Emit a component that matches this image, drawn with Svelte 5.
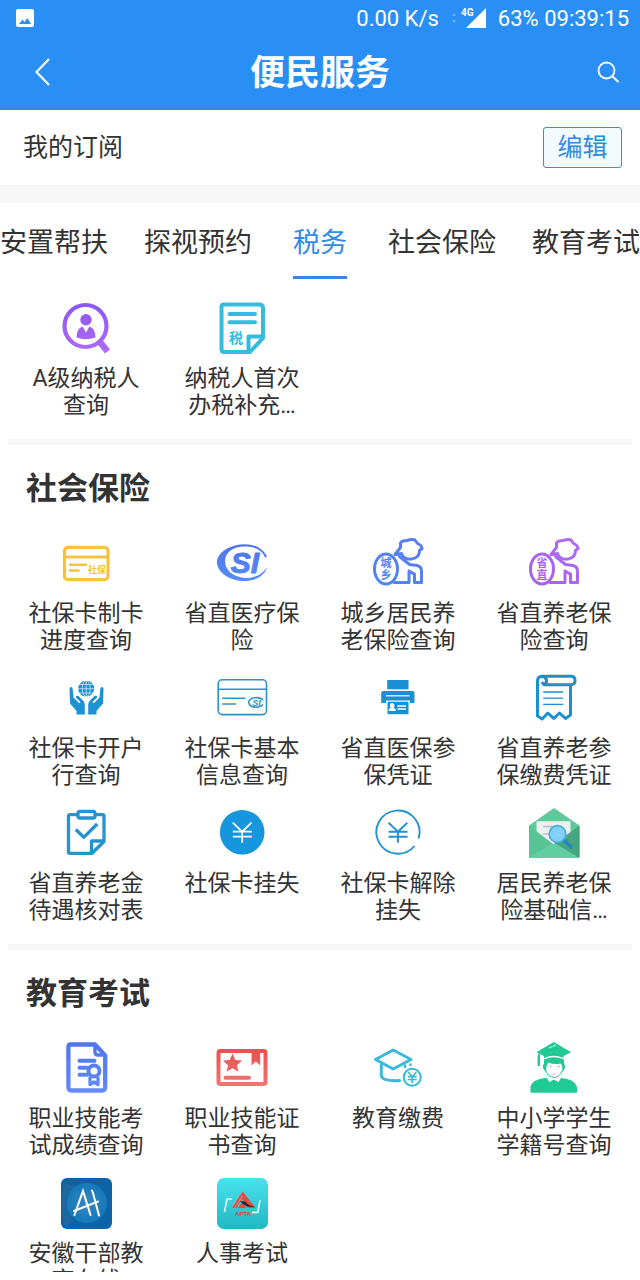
<script lang="ts">
  type Service = { icon: string; name: string };
  type Section = { title: string; services: Service[] };

  const tabs = ['安置帮扶', '探视预约', '税务', '社会保险', '教育考试'];
  let activeTab = $state('税务');

  const taxServices: Service[] = [
    { icon: 'taxpayer', name: 'A级纳税人查询' },
    { icon: 'taxform', name: '纳税人首次办税补充…' },
  ];

  const sections: Section[] = [
    {
      title: '社会保险',
      services: [
        { icon: 'card', name: '社保卡制卡进度查询' },
        { icon: 'si', name: '省直医疗保险' },
        { icon: 'urban', name: '城乡居民养老保险查询' },
        { icon: 'province', name: '省直养老保险查询' },
        { icon: 'hands', name: '社保卡开户行查询' },
        { icon: 'cardinfo', name: '社保卡基本信息查询' },
        { icon: 'printer', name: '省直医保参保凭证' },
        { icon: 'receipt', name: '省直养老参保缴费凭证' },
        { icon: 'clipboard', name: '省直养老金待遇核对表' },
        { icon: 'yen', name: '社保卡挂失' },
        { icon: 'yenring', name: '社保卡解除挂失' },
        { icon: 'envelope', name: '居民养老保险基础信…' },
      ],
    },
    {
      title: '教育考试',
      services: [
        { icon: 'score', name: '职业技能考试成绩查询' },
        { icon: 'certificate', name: '职业技能证书查询' },
        { icon: 'tuition', name: '教育缴费' },
        { icon: 'student', name: '中小学学生学籍号查询' },
        { icon: 'cadre', name: '安徽干部教育在线' },
        { icon: 'personnel', name: '人事考试' },
      ],
    },
  ];
</script>

{#snippet elder(top: string, bottom: string, id: string, from: string, to: string)}
  <defs>
    <linearGradient id={id} gradientUnits="userSpaceOnUse" x1="10" y1="48" x2="40" y2="0">
      <stop offset="0" stop-color={from} />
      <stop offset="1" stop-color={to} />
    </linearGradient>
  </defs>
  <g fill="none" stroke="url(#{id})" stroke-width="3" stroke-linejoin="round" stroke-linecap="round">
    <ellipse cx="13" cy="31" rx="11.5" ry="15" />
    <path d="M22 16.500 L27.500 9.500 L27.500 5 Q29 2.500 34 2.500 Q39 .8 42 2 L44.500 5.500 Q49 7.500 49 10.500 L46.500 12.500 Q46.500 18 42 20 Q37 22.500 32 20 Q29 18 28.500 15.500 L24 16.500" />
    <path d="M26.500 18.500 L36.500 26.500 L44 27.500 Q48.500 28.500 48.500 33 L48.500 44.500 L41.500 44.500 L41.500 36 M36 33 L36 44.500 L21 44.500 M36 33 L41 36" />
  </g>
  <g fill="url(#{id})" font-size="11" font-weight="bold" text-anchor="middle">
    <text x="13" y="29">{top}</text>
    <text x="13" y="41">{bottom}</text>
  </g>
{/snippet}

{#snippet icon(name: string)}
  <svg class="icon" viewBox="0 0 51 51" aria-hidden="true">
    {#if name === 'taxpayer'}
      <defs>
        <linearGradient id="purple" gradientUnits="userSpaceOnUse" x1="0" y1="0" x2="0" y2="50">
          <stop offset="0" stop-color="#8b55f7" />
          <stop offset="1" stop-color="#b06cf3" />
        </linearGradient>
      </defs>
      <g fill="none" stroke="url(#purple)">
        <circle cx="24.500" cy="23" r="21" stroke-width="4.200" />
        <path d="M38.500 38.500 L46.500 48.500" stroke-width="6.500" />
      </g>
      <g fill="url(#purple)">
        <circle cx="25" cy="16.700" r="5.700" />
        <path d="M15.500 34.500 Q15.500 25.500 21.500 23.500 L25 29.500 L28.500 23.500 Q34.500 25.500 34.500 34.500 Q25 38 15.500 34.500Z" />
      </g>
    {:else if name === 'taxform'}
      <g fill="none" stroke="#35bcdd" stroke-width="4" stroke-linejoin="round">
        <path d="M6.500 1.500 H42 Q46 1.500 46 5 V35 L33 49 H7 Q4.500 49 4.500 46 V4 Q4.500 1.500 6.500 1.500Z" />
        <path d="M31.500 48 V33.500 H46" />
        <path d="M12.500 11 H38 M12.500 19.300 H38" stroke-linecap="round" />
      </g>
      <text x="19" y="39.500" font-size="14" font-weight="bold" text-anchor="middle" fill="#35bcdd">税</text>
    {:else if name === 'card'}
      <g fill="none" stroke="#f4c344">
        <rect x="3.500" y="9.300" width="43.500" height="32.400" rx="3.500" stroke-width="3.200" />
        <path d="M3.500 19 H47" stroke-width="3" />
        <path d="M8 26.800 H26 M8 32.500 H18.500" stroke-width="2.600" />
      </g>
      <text x="36" y="35" font-size="9" font-weight="bold" text-anchor="middle" fill="#f4c344">社保</text>
    {:else if name === 'si'}
      <defs>
        <linearGradient id="siblue" gradientUnits="userSpaceOnUse" x1="0" y1="6" x2="0" y2="43">
          <stop offset="0" stop-color="#5270f0" />
          <stop offset="1" stop-color="#558ff5" />
        </linearGradient>
      </defs>
      <path fill="url(#siblue)" d="M50 19 C45 7 30 4 18 7.500 C4 11 -1 20 0 26 C2 36 14 43 27 43 C39 43 48 37 50 29.500 C45 37 37 40 28 40 C15 39 8 31 8 23 C8 14 17 8 29 8.500 C39 9 45 12 48 19.500Z" />
      <text x="28" y="34.500" font-size="30" font-weight="bold" font-style="italic" text-anchor="middle" fill="url(#siblue)" stroke="url(#siblue)" stroke-width="1" class="latin">SI</text>
    {:else if name === 'urban'}
      {@render elder('城', '乡', 'elderblue', '#4f86f3', '#5a7cf3')}
    {:else if name === 'province'}
      {@render elder('省', '直', 'elderpurple', '#a760ee', '#ad6bf5')}
    {:else if name === 'hands'}
      <g fill="#1d92d3">
        <circle cx="25.200" cy="15.700" r="8" />
        <path d="M8.500 16 Q8.500 14 10 14 Q11.500 14 11.700 16 L12.500 24.500 L18 30 Q20 30 19 28.500 L14.800 24.500 Q14.500 22 17.500 23 L22 27.500 Q23.800 29 23.800 32 V41.500 H15.500 V38 L9 30.500Z" />
        <path d="M42.500 16 Q42.500 14 41 14 Q39.500 14 39.300 16 L38.500 24.500 L33 30 Q31 30 32 28.500 L36.200 24.500 Q36.500 22 33.500 23 L29 27.500 Q27.200 29 27.200 32 V41.500 H35.500 V38 L42 30.500Z" />
      </g>
      <g fill="none" stroke="#fff" stroke-width=".6">
        <ellipse cx="25.200" cy="15.700" rx="4" ry="8" />
        <path d="M25.200 7.500 V24 M17 15.700 H33.500 M18 11.500 H32.500 M18 20 H32.500" />
      </g>
    {:else if name === 'cardinfo'}
      <g fill="none" stroke="#2b93cb" stroke-width="1.600">
        <rect x="1.200" y="6.800" width="48.300" height="34.800" rx="4" />
        <path d="M1.200 16.300 H49.500 M5.200 25.200 H28.500 M5.200 31 H19" />
        <path d="M46 27 C43 23.500 34 24 32 28 C30.500 32.500 36 35 41 34 Q44.500 33.500 46 31.500" />
      </g>
      <text x="39.500" y="33" font-size="9" font-weight="bold" font-style="italic" text-anchor="middle" fill="#2b93cb" class="latin">SI</text>
    {:else if name === 'printer'}
      <g fill="#1a90d2">
        <rect x="14.200" y="7" width="21.300" height="9.300" />
        <path d="M10.500 18 H39.500 Q41.500 18 41.500 20 V30 H37 V27.500 H13 V30 H8.200 V20 Q8.200 18 10.500 18Z" />
        <rect x="14.500" y="28.700" width="21" height="12.500" />
      </g>
      <g fill="none" stroke="#fff">
        <path d="M13 22.800 H36.500" stroke-width="1.200" />
        <path d="M24.500 33 H33 M24.500 36 H33" stroke-width="1.300" />
      </g>
      <path fill="#fff" d="M19 30 a2.500 2.500 0 0 1 1.500 4.500 Q23 35.500 23 38 H15.500 Q15.500 35.500 17.800 34.500 A2.500 2.500 0 0 1 19 30Z" />
    {:else if name === 'receipt'}
      <g fill="none" stroke="#1a90d2" stroke-width="3" stroke-linejoin="round">
        <path d="M12.500 3.300 H42 Q46 3.300 46 7.500 Q46 11.700 42 11.700 H15 Q18 10 17.500 7 Q16.500 3.300 12.500 3.300 Q8.500 3.800 8.500 8.500 V43 L13.200 46 L18.800 40 L24.800 45.500 L30.500 40 L36.500 45.500 L41.500 42 V12" />
        <path d="M12.500 9.500 L16 11.500" />
        <path d="M14.200 19 H34.200 M14.200 25.200 H34.200 M14.200 31.300 H34.200" stroke-width="1.300" />
      </g>
    {:else if name === 'clipboard'}
      <g fill="none" stroke="#2892cc" stroke-width="3.300" stroke-linejoin="round">
        <path d="M16 6.700 H9 Q7.500 6.700 7.500 8 V44 Q7.500 45.300 9.300 45.300 H31 L43 33.500 V8 Q43 6.700 41.500 6.700 H35" />
        <rect x="17" y="3.300" width="17" height="6.700" rx="2" />
        <path d="M30.500 44.500 V33 H42.500" />
        <path d="M14.800 21.500 L22.800 29.300 L36.200 16" />
      </g>
    {:else if name === 'yen'}
      <circle cx="25.200" cy="24.300" r="22.300" fill="#1596dd" />
      <path d="M15.800 14.700 L25.200 23.700 L34.500 14.700 M15.800 23.700 H34.800 M15.800 28.700 H34.800 M25.200 23.700 V34.700" fill="none" stroke="#fff" stroke-width="1.700" />
    {:else if name === 'yenring'}
      <g fill="none" stroke="#2492cf" stroke-width="1.900">
        <path d="M45.600 30.500 A21.600 21.600 0 1 0 41.500 38" />
        <path d="M15.500 14.700 L25 23.700 L34.300 14.700 M15.500 23.700 H34.500 M15.500 28.700 H34.500 M25 23.700 V34.700" />
      </g>
    {:else if name === 'envelope'}
      <path fill="#5fc99c" d="M0 17.500 L25 0 L50.500 17.500 V48 Q50.500 50 48.500 50 H2 Q0 50 0 48Z" />
      <path fill="#eef0f0" d="M7.500 13.300 H41.500 V30 L25 40 L7.500 30Z" />
      <path d="M14 18.500 H29 M14 26 H24" stroke="#bdbdbd" stroke-width="1.600" />
      <path fill="#58c496" d="M0 17.500 L24 36 L0 50Z" />
      <path fill="#46a57f" d="M50.500 17.500 L25 36 L50.500 50Z" />
      <path fill="#62cda2" d="M1 49.500 L21 37 Q25 34.500 29 37 L49.500 49.500 Q49 50 48 50 H2Z" />
      <path d="M34 31 L43 40" stroke="#2289be" stroke-width="3.500" />
      <circle cx="28.500" cy="26" r="8.300" fill="#82d1f7" stroke="#47aee2" stroke-width="1.700" />
    {:else if name === 'score'}
      <defs>
        <linearGradient id="docblue" gradientUnits="userSpaceOnUse" x1="0" y1="0" x2="0" y2="50">
          <stop offset="0" stop-color="#4e75ed" />
          <stop offset="1" stop-color="#638bfa" />
        </linearGradient>
      </defs>
      <g fill="none" stroke="url(#docblue)" stroke-width="4.300" stroke-linejoin="round">
        <path d="M9.500 1.500 H34 L44.200 12.500 V44 Q44.200 47.500 41 47.500 H10.500 Q7.400 47.500 7.400 44 V4.500 Q7.400 1.500 9.500 1.500Z" />
        <path d="M34 2 V9 Q34 12 37 12 H44" stroke-width="3.500" />
        <path d="M18.500 17.700 H33.500 M18.500 24.700 H26 M18.500 31.700 H26" stroke-linecap="round" stroke-width="4" />
        <circle cx="33" cy="28" r="5.500" stroke-width="4" />
        <path d="M29 34 V41.500 L33 39 L37 41.500 V34" stroke-width="3.300" />
      </g>
    {:else if name === 'certificate'}
      <defs>
        <linearGradient id="red" gradientUnits="userSpaceOnUse" x1="0" y1="6" x2="0" y2="43">
          <stop offset="0" stop-color="#eb504d" />
          <stop offset="1" stop-color="#ef7672" />
        </linearGradient>
      </defs>
      <g fill="none" stroke="url(#red)" stroke-width="4">
        <rect x="1.500" y="8" width="47" height="33" rx="2" />
        <path d="M8.500 34.700 H32 M8.500 34.800 H32" stroke-linecap="round" />
      </g>
      <path fill="url(#red)" d="M15.500 10.500 L18.300 17 L25 17.500 L20 22.200 L21.500 28.800 L15.500 25.300 L9.500 28.800 L11 22.200 L6 17.500 L12.700 17Z" />
      <path fill="url(#red)" d="M34.500 8 H43.200 V22.500 L38.800 18.500 L34.500 22.500Z" />
    {:else if name === 'tuition'}
      <g fill="none" stroke="#38b9dd" stroke-width="3" stroke-linejoin="round" stroke-linecap="round">
        <path d="M2.500 16.500 L20.200 7 L38 16.500 L20.200 26Z" />
        <path d="M8.300 22 V32 Q8.500 38.500 26.500 37.500" />
        <path d="M32 22.500 V24 M37.500 21.500 V22" stroke-width="2.500" />
        <circle cx="39.200" cy="34.300" r="8.500" stroke-width="2" />
        <path d="M35.500 29.500 L39.200 33.500 L43 29.500 M35.500 33.700 H43 M35.500 36.500 H43 M39.200 33.500 V39.500" stroke-width="1.700" />
      </g>
    {:else if name === 'student'}
      <g fill="#21c994">
        <path d="M7.500 9.300 L24.800 -1 L42.200 9.300 L34.500 13 Q25 5 15 13Z" />
        <path d="M15 12 Q25 5.500 34.500 12 V15 Q25 10.500 15 15Z" />
        <path d="M9.500 10 L11 11 V22.500 Q9.500 24 8.500 22 V15Z" />
        <path d="M15 16.500 Q25 12 35 16.500 V21 Q37 22 35.500 26 L33.500 29 Q33.500 22 31.500 20.500 Q25 22 19.500 19.500 Q17 22 17 29 L14.500 26 Q13 22 15 21Z" />
        <path d="M1.500 49.700 V44 Q3 36 17.500 35 L20.500 39 L24.800 36.500 L29.500 39 L32 35 Q46 36 48 44 V49.700Z" />
      </g>
      <path d="M16.500 27 Q19 34 25 34.500 Q31 34 33.500 27" fill="none" stroke="#21c994" stroke-width="1" />
      <path d="M20 23.500 H22.500 M28 23.500 H30.500 M24 31 H26.500" stroke="#21c994" stroke-width=".6" />
      <path d="M20 5 L27 2" stroke="#c9f5e6" stroke-width="1" />
    {:else if name === 'cadre'}
      <defs>
        <radialGradient id="globe">
          <stop offset="0" stop-color="#3885c1" />
          <stop offset="1" stop-color="#1579b9" />
        </radialGradient>
      </defs>
      <rect width="51" height="51" rx="6" fill="#0d63a5" />
      <path d="M3 6 Q14 5 15 12 L8 28 L12 43 L5 50 Q0 40 0 24Z" fill="#4a7096" opacity=".3" />
      <circle cx="26" cy="25" r="20" fill="url(#globe)" />
      <path d="M13.500 37 L22 13 L29.500 37 M13 33 L37 23.500 M31 12.500 L32 15 L38 37.500" fill="none" stroke="#fff" stroke-width="2" stroke-linecap="round" />
    {:else if name === 'personnel'}
      <defs>
        <linearGradient id="teal" x1="0" y1="0" x2="0" y2="1">
          <stop offset="0" stop-color="#49e2ec" />
          <stop offset="1" stop-color="#21b7c3" />
        </linearGradient>
      </defs>
      <rect width="51" height="51" rx="7" fill="url(#teal)" />
      <path d="M15.200 21 H10 L7.500 34 M43 22 L40.800 34.300 H35" fill="none" stroke="#d6fbff" stroke-width="1.700" />
      <path fill="#e64a45" d="M25.800 13.500 L38.500 30 H31 L25 21 L19.500 30 H14Z" />
      <path fill="#e64a45" d="M25 24 L29.500 30 H21Z" />
      <path d="M22 17.500 L14.500 30 M25.500 18 L17.500 30" stroke="#7ed6d6" stroke-width=".7" />
      <path d="M23 23 L28 23.500 L31 26.500 L38 29 L30 28.500 L26 26Z" fill="#252525" />
      <text x="26" y="37.500" font-size="6" font-weight="bold" text-anchor="middle" fill="#c84f50" class="latin">APTA</text>
    {/if}
  </svg>
{/snippet}

{#snippet grid(services: Service[])}
  <ul class="grid">
    {#each services as service}
      <li>
        <a class="service" href="#{service.icon}">
          {@render icon(service.icon)}
          <span class="label">{service.name}</span>
        </a>
      </li>
    {/each}
  </ul>
{/snippet}

<div class="page">
  <header>
    <div class="status">
      <svg class="picture" viewBox="0 0 18 18" aria-hidden="true">
        <rect width="18" height="18" rx="2" fill="#fff" />
        <path d="M3 15 L6.500 10.500 L8.500 13 L11.500 9 L15 15Z" fill="#298ff5" />
      </svg>
      <span>0.00 K/s</span>
      <svg class="signal" viewBox="0 0 36 22" aria-hidden="true">
        <path d="M1 9 L3 6 L5 9Z M1 13 L3 16 L5 13Z" fill="#6bb3f8" />
        <text x="10" y="9" font-size="10" font-weight="bold" fill="#fff">4G</text>
        <path d="M35 1 V21 H15Z" fill="#fff" />
      </svg>
      <span>63% 09:39:15</span>
    </div>
    <div class="bar">
      <button class="nav" aria-label="返回">
        <svg viewBox="0 0 30 30" width="30" height="30">
          <path d="M21 2 L8.500 15 L21 28" fill="none" stroke="#fff" stroke-width="2.200" />
        </svg>
      </button>
      <h1>便民服务</h1>
      <button class="nav search" aria-label="搜索">
        <svg viewBox="0 0 24 24" width="24" height="24">
          <circle cx="10.500" cy="10.500" r="8" fill="none" stroke="#fff" stroke-width="1.800" />
          <path d="M16.500 16.500 L22.500 22" stroke="#fff" stroke-width="2" />
        </svg>
      </button>
    </div>
  </header>

  <div class="subscribe">
    <span>我的订阅</span>
    <button class="edit">编辑</button>
  </div>

  <nav class="tabs">
    {#each tabs as tab}
      <button class="tab" class:active={tab === activeTab} onclick={() => (activeTab = tab)}>
        <span>{tab}</span>
      </button>
    {/each}
  </nav>

  <main>
    <section>{@render grid(taxServices)}</section>
    {#each sections as section}
      <section>
        <h2>{section.title}</h2>
        {@render grid(section.services)}
      </section>
    {/each}
  </main>
</div>

<style>
  :global(body) {
    margin: 0;
    background: #fff;
  }
  .page {
    display: flex;
    flex-direction: column;
    box-sizing: border-box;
    height: 100vh;
    padding-bottom: 8px;
    overflow: hidden;
    color: #333;
    font-family: Roboto, 'Noto Sans CJK SC', sans-serif;
  }
  button {
    padding: 0;
    border: 0;
    background: none;
    color: inherit;
    font: inherit;
    cursor: pointer;
  }
  header {
    flex: none;
    background: #298ff5;
    color: #fff;
  }
  .status {
    display: flex;
    align-items: center;
    height: 36px;
    padding: 0 11px 0 16px;
    font-size: 22px;
  }
  .picture {
    width: 18px;
    height: 18px;
    margin-right: auto;
  }
  .signal {
    width: 36px;
    height: 22px;
    margin: 0 11px 0 12px;
  }
  .bar {
    display: grid;
    grid-template-columns: 1fr auto 1fr;
    align-items: center;
    height: 72px;
    padding: 0 20px 2px;
  }
  .nav {
    display: flex;
    padding-left: 8px;
  }
  .search {
    justify-self: end;
  }
  h1 {
    margin: 0;
    padding-top: 4px;
    font-size: 35px;
    font-weight: bold;
    line-height: 48px;
  }
  .subscribe {
    display: flex;
    flex: none;
    align-items: center;
    justify-content: space-between;
    height: 75px;
    padding: 0 18px 0 23px;
    border-bottom: 18px solid #f7f7f7;
    font-size: 25px;
    line-height: 36px;
  }
  .edit {
    box-sizing: border-box;
    width: 79px;
    height: 41px;
    border: 1px solid #3a8fd6;
    border-radius: 3px;
    background: #f4fbfe;
    color: #2f8ae0;
  }
  .tabs {
    display: flex;
    flex: none;
    justify-content: space-between;
  }
  .tab {
    min-width: 64px;
    font-size: 27px;
    line-height: 40px;
    white-space: nowrap;
  }
  .tab span {
    display: inline-block;
    padding: 20px 0 13px;
    border-bottom: 3px solid transparent;
  }
  .tab.active span {
    border-color: #3489e3;
    color: #2f8ae8;
  }
  main {
    flex: 1;
    min-height: 0;
    padding: 24px 8px 0;
    overflow: hidden;
  }
  section {
    padding-bottom: 23px;
  }
  section + section {
    border-top: 6px solid #f7f7f7;
  }
  h2 {
    margin: 0;
    padding: 21px 18px 26px;
    font-size: 31px;
    font-weight: bold;
    line-height: 46px;
  }
  .grid {
    display: grid;
    grid-template-columns: repeat(4, 1fr);
    row-gap: 22px;
    margin: 0;
    padding: 0;
    list-style: none;
  }
  .service {
    display: flex;
    flex-direction: column;
    align-items: center;
    gap: 11px;
    color: inherit;
    text-decoration: none;
  }
  .icon {
    width: 51px;
    height: 51px;
    overflow: visible;
    font-family: 'Noto Sans CJK SC', sans-serif;
  }
  .signal {
    font-family: Roboto, sans-serif;
  }
  .latin {
    font-family: 'Liberation Sans', sans-serif;
  }
  .label {
    width: 120px;
    height: 51px;
    overflow: hidden;
    font-size: 23px;
    line-height: 27px;
    text-align: center;
  }
</style>
